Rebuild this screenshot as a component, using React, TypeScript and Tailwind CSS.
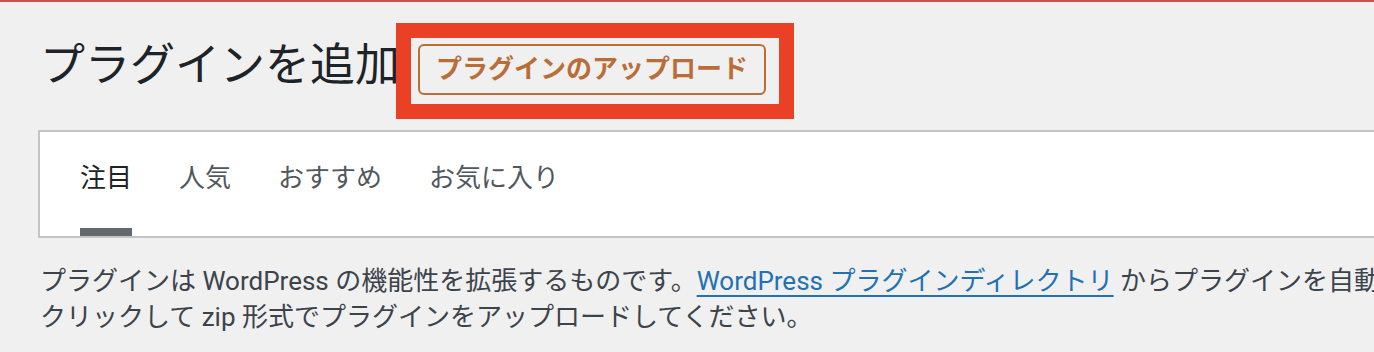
import React from 'react';

const font = { fontFamily: 'Roboto, "Noto Sans CJK JP", sans-serif' };

const tabs = [
    { label: '注目', active: true },
    { label: '人気', active: false },
    { label: 'おすすめ', active: false },
    { label: 'お気に入り', active: false },
];

const FilterTabs: React.FC = () => {
    return (
        <div className="ml-[38px] mt-[35px] w-[1400px] h-[108px] bg-white border-2 border-[#c3c4c7] flex gap-[47px] pl-[40px]">
            {tabs.map((tab) => (
                <div
                    key={tab.label}
                    className={
                        tab.active
                            ? 'h-full pt-[33px] border-b-[8px] border-[#646970] text-[26px] leading-[26px] text-[#1d2327]'
                            : 'h-full pt-[33px] border-b-[8px] border-transparent text-[26px] leading-[26px] text-[#50575e]'
                    }
                >
                    {tab.label}
                </div>
            ))}
        </div>
    );
};

export default function App() {
    return (
        <div className="relative w-full h-[352px] overflow-hidden bg-[#f0f0f1]" style={font}>
            <div className="h-[2px] bg-[#c9524a]" />

            <div className="flex items-start">
                <h1 className="ml-[40px] mt-[38px] text-[45px] leading-[52px] font-normal text-[#1d2327] whitespace-nowrap">
                    プラグインを追加
                </h1>
                <button className="ml-[18px] mt-[42px] h-[51px] px-[16px] border-2 border-[#b96e38] rounded-[6px] text-[26px] font-bold text-[#b96e38] whitespace-nowrap">
                    プラグインのアップロード
                </button>
            </div>

            <FilterTabs />

            <div className="mt-[25px] ml-[40px] text-[26px] leading-[36px] text-[#3c434a] whitespace-nowrap">
                <p>
                    プラグインは WordPress の機能性を拡張するものです。
                    <a href="#" className="text-[#2271b1] underline decoration-2 underline-offset-[5px]">
                        WordPress プラグインディレクトリ
                    </a>{' '}
                    からプラグインを自動でインストールするか、このページ上部のボタンを
                </p>
                <p>クリックして zip 形式でプラグインをアップロードしてください。</p>
            </div>

            {/* annotation frame over the upload button */}
            <div className="absolute left-[396px] top-[23px] w-[398px] h-[96px] border-[15px] border-[#ea4025] pointer-events-none" />
        </div>
    );
}
